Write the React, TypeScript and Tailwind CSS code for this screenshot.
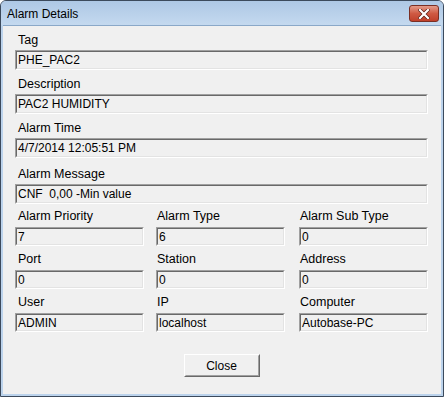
import React from 'react';

type Field = { label: string; value: string };

const wide: Field[] = [
  { label: 'Tag', value: 'PHE_PAC2' },
  { label: 'Description', value: 'PAC2 HUMIDITY' },
  { label: 'Alarm Time', value: '4/7/2014 12:05:51 PM' },
  { label: 'Alarm Message', value: 'CNF  0,00 -Min value' },
];

const grid: Field[] = [
  { label: 'Alarm Priority', value: '7' },
  { label: 'Alarm Type', value: '6' },
  { label: 'Alarm Sub Type', value: '0' },
  { label: 'Port', value: '0' },
  { label: 'Station', value: '0' },
  { label: 'Address', value: '0' },
  { label: 'User', value: 'ADMIN' },
  { label: 'IP', value: 'localhost' },
  { label: 'Computer', value: 'Autobase-PC' },
];

// sunken edit box, classic win32 look
function Box({ value, h }: { value: string; h: string }) {
  return (
    <div className={`${h} border border-t-[#a0a0a0] border-l-[#a0a0a0] border-b-white border-r-white`}>
      <div className="h-full border border-t-[#696969] border-l-[#696969] border-b-[#e3e3e3] border-r-[#e3e3e3] pl-px flex items-center text-[12px] leading-none whitespace-pre overflow-hidden">
        {value}
      </div>
    </div>
  );
}

export default function App() {
  return (
    <div
      className="w-[444px] h-[397px] flex flex-col bg-[#bcd3ec] border border-[#3c4a5c] rounded-t-[6px] overflow-hidden text-black"
      style={{ fontFamily: '"Liberation Sans", Arial, sans-serif' }}
    >
      {/* title bar */}
      <div className="h-[24px] shrink-0 flex items-center justify-between pl-[6px] pr-[4px] bg-gradient-to-b from-[#aec8e5] to-[#c4d9ef]">
        <span className="text-[12px] pt-px">Alarm Details</span>
        <button className="w-[30px] h-[17px] mt-[1px] rounded-[3px] border border-[#7a2f24] bg-gradient-to-b from-[#e39a89] via-[#cf5a43] to-[#c0402a] flex items-center justify-center">
          <svg width="12" height="10" viewBox="0 0 12 10">
            <path d="M2 1 L10 9 M10 1 L2 9" stroke="#5a1d14" strokeWidth="3.6" strokeLinecap="square" />
            <path d="M2 1 L10 9 M10 1 L2 9" stroke="#ffffff" strokeWidth="2.2" strokeLinecap="square" />
          </svg>
        </button>
      </div>

      {/* client area */}
      <div className="flex-1 mx-[2px] mb-[2px] bg-[#f0f0f0] border-t border-[#8aa8c8] pl-[12px] pr-[13px] pt-[7px] text-[12.5px]">
        <div className="flex flex-col gap-[7px]">
          {wide.map((f, i) => (
            <div key={f.label} className={`flex flex-col gap-[3px] ${i === 3 ? 'mt-[2px]' : ''}`}>
              <div className="h-[14px] leading-[14px] pl-[3px]">{f.label}</div>
              <Box value={f.value} h="h-[20px]" />
            </div>
          ))}
        </div>

        <div className="grid grid-cols-[141px_143px_129px] gap-y-[6px] mt-[5px]">
          {grid.map((f, i) => (
            <div key={f.label} className="w-[129px] flex flex-col gap-[4px]">
              <div className={`h-[14px] leading-[14px] ${i % 3 === 0 ? 'pl-[3px]' : 'pl-px'}`}>{f.label}</div>
              <Box value={f.value} h="h-[19px]" />
            </div>
          ))}
        </div>

        <div className="flex justify-center mt-[22px]">
          <button className="w-[76px] h-[23px] border border-t-white border-l-white border-b-[#696969] border-r-[#696969] bg-[#f0f0f0]">
            <div className="h-full border border-t-[#f0f0f0] border-l-[#f0f0f0] border-b-[#a0a0a0] border-r-[#a0a0a0] flex items-center justify-center text-[12px]">
              Close
            </div>
          </button>
        </div>
      </div>
    </div>
  );
}
